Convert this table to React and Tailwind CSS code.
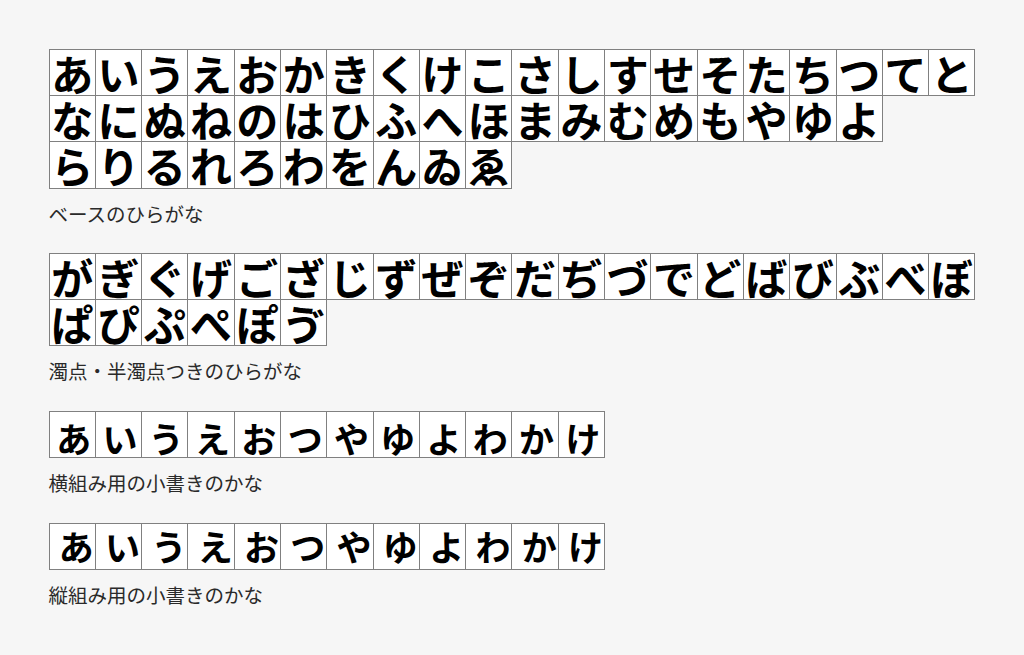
import React from "react";

const g1 = ["あいうえおかきくけこさしすせそたちつてと", "なにぬねのはひふへほまみむめもやゆよ", "らりるれろわをんゐゑ"];
const g2 = ["がぎぐげござじずぜぞだぢづでどばびぶべぼ", "ぱぴぷぺぽゔ"];
const g3 = ["あいうえおつやゆよわかけ"];

const kanaFont = { fontFamily: '"Noto Sans CJK JP", "Noto Sans CJK SC", sans-serif' };

function Cell({ c, variant }) {
  if (variant === "h") {
    return (
      <div className="w-[47.3px] h-[47.2px] -mr-px border border-[#808080] bg-white flex items-end justify-center pl-[3px]">
        <span className="text-[35px] leading-[38px] font-bold text-black">{c}</span>
      </div>
    );
  }
  if (variant === "v") {
    return (
      <div className="w-[47.3px] h-[47.2px] -mr-px border border-[#808080] bg-white flex items-center justify-end pr-[1px]">
        <span className="text-[35px] leading-[38px] font-bold text-black">{c}</span>
      </div>
    );
  }
  return (
    <div className="w-[47.3px] h-[47.2px] -mr-px border border-[#808080] bg-white flex items-center justify-center">
      <span className="text-[42px] leading-[44px] font-bold text-black">{c}</span>
    </div>
  );
}

function Grid({ rows, variant }) {
  return (
    <div className="flex flex-col">
      {rows.map((row, r) => (
        <div key={r} className="flex -mb-px">
          {Array.from(row).map((c, i) => (
            <Cell key={i} c={c} variant={variant} />
          ))}
        </div>
      ))}
    </div>
  );
}

function Caption({ children }) {
  return (
    <div className="mt-[14px] text-[19.5px] leading-[24px] text-[#2a2a2a]">{children}</div>
  );
}

export default function App() {
  return (
    <div className="min-h-[655px] w-[1024px] bg-[#f6f6f6] pl-[48.5px] pt-[49px]" style={kanaFont}>
      <Grid rows={g1} />
      <Caption>ベースのひらがな</Caption>
      <div className="mt-[27.5px]">
        <Grid rows={g2} />
      </div>
      <Caption>濁点・半濁点つきのひらがな</Caption>
      <div className="mt-[27.5px]">
        <Grid rows={g3} variant="h" />
      </div>
      <Caption>横組み用の小書きのかな</Caption>
      <div className="mt-[27.5px]">
        <Grid rows={g3} variant="v" />
      </div>
      <Caption>縦組み用の小書きのかな</Caption>
    </div>
  );
}
